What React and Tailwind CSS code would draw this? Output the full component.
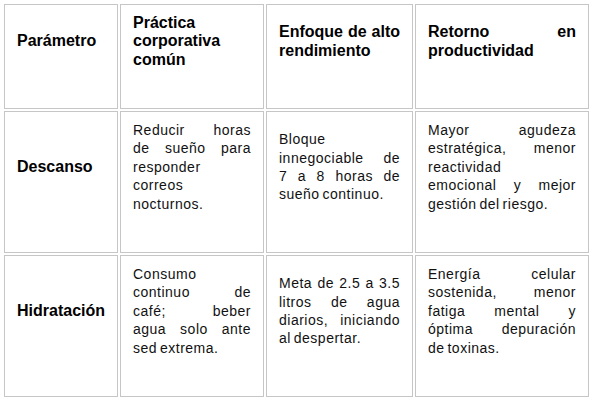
import React from 'react';

const rows = [
  {
    head: true,
    cells: [
      ['Parámetro'],
      ['Práctica', 'corporativa', 'común'],
      ['Enfoque de alto', 'rendimiento'],
      ['Retorno en', 'productividad'],
    ],
  },
  {
    label: 'Descanso',
    cells: [
      ['Reducir horas', 'de sueño para', 'responder', 'correos', 'nocturnos.'],
      ['Bloque', 'innegociable de', '7 a 8 horas de', 'sueño continuo.'],
      ['Mayor agudeza', 'estratégica, menor', 'reactividad', 'emocional y mejor', 'gestión del riesgo.'],
    ],
  },
  {
    label: 'Hidratación',
    cells: [
      ['Consumo', 'continuo de', 'café; beber', 'agua solo ante', 'sed extrema.'],
      ['Meta de 2.5 a 3.5', 'litros de agua', 'diarios, iniciando', 'al despertar.'],
      ['Energía celular', 'sostenida, menor', 'fatiga mental y', 'óptima depuración', 'de toxinas.'],
    ],
  },
];

// each visual line is its own block so the breaks match the document
function Lines({ lines }) {
  return lines.map((line, i) => (
    <span
      key={i}
      className={
        i < lines.length - 1
          ? 'block whitespace-nowrap text-justify [text-align-last:justify]'
          : 'block whitespace-nowrap text-left'
      }
    >
      {line}
    </span>
  ));
}

function Cell({ children, bold }) {
  return (
    <div
      className={`flex flex-col justify-center border border-[#c6c6c6] bg-white pl-[12px] pr-[12px] pt-[8px] pb-[38px] leading-[18.4px] ${
        bold
          ? 'text-[16px] font-bold text-black'
          : 'text-[14px] tracking-[0.5px] [word-spacing:-1.5px] text-[#111]'
      }`}
    >
      <div>{children}</div>
    </div>
  );
}

export default function App() {
  return (
    <div
      className="w-[591px] h-[404px] bg-white pl-[4px] pt-[4px]"
      style={{ fontFamily: '"Liberation Sans", Arial, sans-serif' }}
    >
      <div className="grid grid-cols-[114px_144px_147px_174px] grid-rows-[105px_142px_142px] gap-[2px]">
        {rows.map((row, r) =>
          row.head ? (
            row.cells.map((c, i) => (
              <Cell key={`${r}-${i}`} bold>
                <Lines lines={c} />
              </Cell>
            ))
          ) : (
            <React.Fragment key={r}>
              <Cell bold>
                <span className="block">{row.label}</span>
              </Cell>
              {row.cells.map((c, i) => (
                <Cell key={i}>
                  <Lines lines={c} />
                </Cell>
              ))}
            </React.Fragment>
          )
        )}
      </div>
    </div>
  );
}
